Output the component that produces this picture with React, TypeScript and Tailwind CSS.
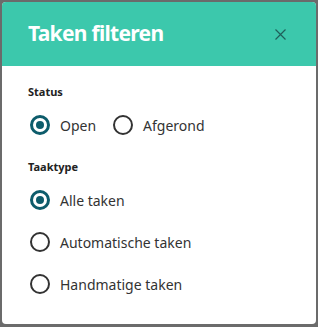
import { useState } from "react";

function Radio({ checked, label, onClick }: { checked: boolean; label: string; onClick: () => void }) {
  return (
    <button type="button" onClick={onClick} className="flex h-[22px] items-center gap-[10px] text-left">
      <span
        className={
          checked
            ? "flex h-[20px] w-[20px] shrink-0 items-center justify-center rounded-full border-[3px] border-[#0d5c6b]"
            : "flex h-[20px] w-[20px] shrink-0 items-center justify-center rounded-full border-[2.5px] border-[#333333]"
        }
      >
        {checked && <span className="h-[8px] w-[8px] rounded-full bg-[#0d5c6b]" />}
      </span>
      <span className="text-[14px] text-[#333333]">{label}</span>
    </button>
  );
}

export default function App() {
  const [status, setStatus] = useState<"open" | "done">("open");
  const [type, setType] = useState<"all" | "auto" | "manual">("all");

  return (
    <div className="h-[327px] w-[318px] bg-[#6b6b6b] p-[2px]" style={{ fontFamily: '"Noto Sans", "Open Sans", sans-serif' }}>
      <div className="h-[322px] overflow-hidden rounded-[4px] bg-white">
        {/* Header */}
        <div className="flex h-[64px] items-center justify-between bg-[#3cc8ac] pl-[26px] pr-[30px]">
          <h2 className="text-[21px] font-bold tracking-[-0.7px] text-white">Taken filteren</h2>
          <button type="button" className="text-[#1f5f5a]">
            <svg width="11" height="11" viewBox="0 0 11 11" fill="none" stroke="currentColor" strokeWidth="1.2">
              <path d="M0.5 0.5l10 10M10.5 0.5L0.5 10.5" />
            </svg>
          </button>
        </div>

        {/* Body */}
        <div className="px-[26px] pt-[18px]">
          <div className="text-[11px] font-bold leading-[16px] text-[#222222]">Status</div>
          <div className="mt-[14px] flex items-center gap-[17px] pl-[2px]">
            <Radio checked={status === "open"} label="Open" onClick={() => setStatus("open")} />
            <Radio checked={status === "done"} label="Afgerond" onClick={() => setStatus("done")} />
          </div>

          <div className="mt-[23px] text-[11px] font-bold leading-[16px] text-[#222222]">Taaktype</div>
          <div className="mt-[14px] flex flex-col gap-[20px] pl-[2px]">
            <Radio checked={type === "all"} label="Alle taken" onClick={() => setType("all")} />
            <Radio checked={type === "auto"} label="Automatische taken" onClick={() => setType("auto")} />
            <Radio checked={type === "manual"} label="Handmatige taken" onClick={() => setType("manual")} />
          </div>
        </div>
      </div>
    </div>
  );
}
